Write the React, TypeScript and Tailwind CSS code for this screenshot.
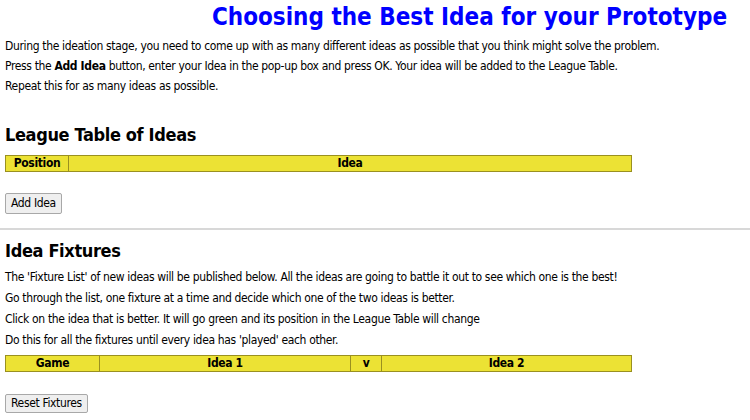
import { useState } from "react";

type Idea = { id: number; name: string; points: number };

export default function App() {
    const [ideas, setIdeas] = useState<Idea[]>([]);

    const addIdea = () => {
        const name = window.prompt("Enter your Idea");
        if (!name) return;
        setIdeas([...ideas, { id: ideas.length + 1, name, points: 0 }]);
    };

    const cell = "border border-[#9a9020] px-1 py-0 font-bold text-center leading-[15px]";

    return (
        <div className="min-h-screen bg-white pl-[5px] font-['DejaVu_Sans_Condensed','DejaVu_Sans',sans-serif] text-[12px] tracking-[-0.35px] text-black">
            <div className="flex justify-center pl-[184px] pt-[2px]">
                <h1 className="text-[24px] leading-[30px] font-bold tracking-normal text-[#0000ff]">
                    Choosing the Best Idea for your Prototype
                </h1>
            </div>

            <div className="mt-[4px] leading-[20px]">
                <p>During the ideation stage, you need to come up with as many different ideas as possible that you think might solve the problem.</p>
                <p>
                    Press the <b>Add Idea</b> button, enter your Idea in the pop-up box and press OK. Your idea will be added to the League Table.
                </p>
                <p>Repeat this for as many ideas as possible.</p>
            </div>

            <h2 className="mt-[27px] text-[18px] leading-[24px] font-bold">League Table of Ideas</h2>

            <table className="mt-[8px] w-[627px] border-collapse border border-[#777] bg-[#ece234]">
                <thead>
                    <tr>
                        <th className={`${cell} w-[63px]`}>Position</th>
                        <th className={cell}>Idea</th>
                    </tr>
                </thead>
                <tbody>
                    {ideas.map((idea, i) => (
                        <tr key={idea.id}>
                            <td className="border border-[#999] px-1 text-center">{i + 1}</td>
                            <td className="border border-[#999] px-1">{idea.name}</td>
                        </tr>
                    ))}
                </tbody>
            </table>

            <button
                onClick={addIdea}
                className="mt-[21px] h-[21px] rounded-[2px] border border-[#a8a8a8] bg-[#efefef] px-[5px] text-[12px] leading-[19px] text-black"
            >
                Add Idea
            </button>

            <hr className="mt-[14px] -ml-[5px] border-t-2 border-[#d8d8d8]" />

            <h2 className="mt-[9px] text-[18px] leading-[24px] font-bold">Idea Fixtures</h2>

            <div className="mt-[4px] leading-[21px]">
                <p>The 'Fixture List' of new ideas will be published below. All the ideas are going to battle it out to see which one is the best!</p>
                <p>Go through the list, one fixture at a time and decide which one of the two ideas is better.</p>
                <p>Click on the idea that is better. It will go green and its position in the League Table will change</p>
                <p>Do this for all the fixtures until every idea has 'played' each other.</p>
            </div>

            <table className="mt-[4px] w-[627px] border-collapse border border-[#777] bg-[#ece234]">
                <thead>
                    <tr>
                        <th className={`${cell} w-[94px]`}>Game</th>
                        <th className={`${cell} w-[251px]`}>Idea 1</th>
                        <th className={`${cell} w-[31px]`}>v</th>
                        <th className={cell}>Idea 2</th>
                    </tr>
                </thead>
            </table>

            <button
                onClick={() => setIdeas(ideas.map((i) => ({ ...i, points: 0 })))}
                className="mt-[22px] h-[19px] rounded-[2px] border border-[#a8a8a8] bg-[#efefef] px-[5px] text-[12px] leading-[17px] text-black"
            >
                Reset Fixtures
            </button>
        </div>
    );
}
